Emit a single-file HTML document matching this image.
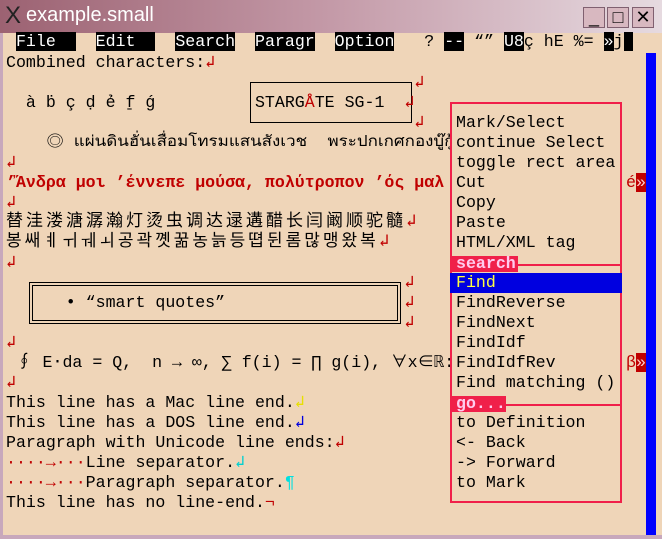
<!DOCTYPE html>
<html><head><meta charset="utf-8"><style>
*{margin:0;padding:0;box-sizing:border-box}
body{width:662px;height:539px;overflow:hidden;background:#efd5b8;position:relative;font-family:"Liberation Mono","Noto Sans CJK SC",monospace;font-size:16.6px;color:#000}
.title{position:absolute;left:0;top:0;width:662px;height:33px;background:linear-gradient(90deg,#9c6272,#c49aa8 50%,#e6dae0);}
.title .t{position:absolute;left:26px;top:4px;font-family:"Liberation Sans",sans-serif;font-size:20px;color:#fff}
.btn{position:absolute;top:7px;width:22px;height:21px;background:#d8b8c0;border:1px solid #806070;font-family:"Liberation Sans",sans-serif;font-size:18px;line-height:19px;text-align:center}
.l{position:absolute;left:6px;white-space:pre;line-height:20px;height:20px}
.r{color:#c00000}
.blk{background:#000;color:#fff}
.lb{position:absolute;left:0;top:33px;width:3px;height:506px;background:#c8a8bc}
.bb{position:absolute;left:0;top:535px;width:662px;height:4px;background:#c8a8bc}
.sb{position:absolute;left:646px;top:53px;width:10px;height:482px;background:#0000ff}
.menu{position:absolute;left:450px;top:102px;width:172px;height:401px;border:2px solid #f0204a;background:#efd5b8;z-index:5}
.mi{position:absolute;left:4px;white-space:pre;line-height:20px}
.hdr{position:absolute;left:0;height:16px;background:#f0204a;color:#fce;font-weight:bold;line-height:16px;padding-left:4px}
.sep{position:absolute;left:0;width:168px;height:2px;background:#f0204a}
</style></head><body>
<div class="title"><span style="position:absolute;left:5px;top:2px;font-size:24px;font-family:'Liberation Sans';color:#222">X</span><span class="t">example.small</span>
<div class="btn" style="left:583px">_</div><div class="btn" style="left:607px">□</div><div class="btn" style="left:632px">✕</div></div>
<div class="lb"></div>
<div class="l" style="top:32px"> <span class="blk">File  </span>  <span class="blk">Edit  </span>  <span class="blk">Search</span>  <span class="blk">Paragr</span>  <span class="blk">Option</span>   ? <span class="blk">--</span> “” <span class="blk">U8</span>ç hE %= <span class="blk">»</span>j<span class="blk"> </span></div>
<div class="l" style="top:53px">Combined characters:<span class="r">↲</span></div>
<div style="position:absolute;left:250px;top:82px;width:162px;height:41px;border:1px solid #000"></div>
<div class="l" style="top:73px">                                         <span class="r">↲</span></div>
<div class="l" style="top:93px">  à ḃ ç ḍ ẻ f̱ ǵ          STARG<span class="r">Å</span>TE SG-1  <span class="r">↲</span></div>
<div class="l" style="top:113px">                                         <span class="r">↲</span></div>
<div class="l" style="top:133px;font-size:15px;transform:scaleX(1.13);transform-origin:0 0">    ◎ แผ่นดินฮั่นเสื่อมโทรมแสนสังเวช  พระปกเกศกองบู๊กู้</div>
<div class="l r" style="top:153px">↲</div>
<div class="l r" style="top:173px;font-weight:bold">’Ἄνδρα μοι ’έννεπε μούσα, πολύτροπον ’ός μαλ</div>
<div class="l r" style="top:193px">↲</div>
<div class="l" style="top:213px;font-size:17px;letter-spacing:3px">替洼溇溏潺瀚灯烫虫调达逯遘醋长闫阚顺驼髓<span class="r">↲</span></div>
<div class="l" style="top:233px;font-size:17px;letter-spacing:3px">봉쌔ㅖㅟㅞㅚ공곽꼣꿂농늙등뗩뒨롬많맹왔복<span class="r">↲</span></div>
<div class="l r" style="top:253px">↲</div>
<div style="position:absolute;left:29px;top:282px;width:372px;height:42px;border:1px solid #000"><div style="position:absolute;left:2px;top:2px;right:2px;bottom:2px;border:1px solid #000"></div></div>
<div class="l" style="top:273px">                                        <span class="r">↲</span></div>
<div class="l" style="top:293px">      • “smart quotes”                  <span class="r">↲</span></div>
<div class="l" style="top:313px">                                        <span class="r">↲</span></div>
<div class="l r" style="top:333px">↲</div>
<div class="l" style="top:353px"> ∮ E⋅da = Q,  n → ∞, ∑ f(i) = ∏ g(i), ∀x∈ℝ:</div>
<div class="l r" style="top:373px">↲</div>
<div class="l" style="top:393px">This line has a Mac line end.<span style="color:#e8e000">↲</span></div>
<div class="l" style="top:413px">This line has a DOS line end.<span style="color:#0000e0">↲</span></div>
<div class="l" style="top:433px">Paragraph with Unicode line ends:<span class="r">↲</span></div>
<div class="l" style="top:453px"><span class="r">····→···</span>Line separator.<span style="color:#00d0d0">↲</span></div>
<div class="l" style="top:473px"><span class="r">····→···</span>Paragraph separator.<span style="color:#00e0e0">¶</span></div>
<div class="l" style="top:493px">This line has no line-end.<span class="r">¬</span></div>
<div class="l" style="top:173px;left:626px"><span class="r">é</span><span style="background:#c00000;color:#fcc">»</span></div>
<div class="l" style="top:353px;left:626px"><span class="r">β</span><span style="background:#c00000;color:#fcc">»</span></div>
<div class="menu">
<div class="mi" style="top:9px">Mark/Select</div>
<div class="mi" style="top:29px">continue Select</div>
<div class="mi" style="top:49px">toggle rect area</div>
<div class="mi" style="top:69px">Cut</div>
<div class="mi" style="top:89px">Copy</div>
<div class="mi" style="top:109px">Paste</div>
<div class="mi" style="top:129px">HTML/XML tag</div>
<div class="sep" style="top:160px"></div>
<div class="hdr" style="top:152px;width:66px">search</div>
<div style="position:absolute;left:-2px;top:169px;width:172px;height:20px;background:#0000e0"></div>
<div class="mi" style="top:169px;color:#ffff40">Find</div>
<div class="mi" style="top:189px">FindReverse</div>
<div class="mi" style="top:209px">FindNext</div>
<div class="mi" style="top:229px">FindIdf</div>
<div class="mi" style="top:249px">FindIdfRev</div>
<div class="mi" style="top:269px">Find matching ()</div>
<div class="sep" style="top:300px"></div>
<div class="hdr" style="top:292px;width:54px">go...</div>
<div class="mi" style="top:309px">to Definition</div>
<div class="mi" style="top:329px">&lt;- Back</div>
<div class="mi" style="top:349px">-&gt; Forward</div>
<div class="mi" style="top:369px">to Mark</div>
</div>
<div class="sb"></div>
<div class="bb"></div>
</body></html>
